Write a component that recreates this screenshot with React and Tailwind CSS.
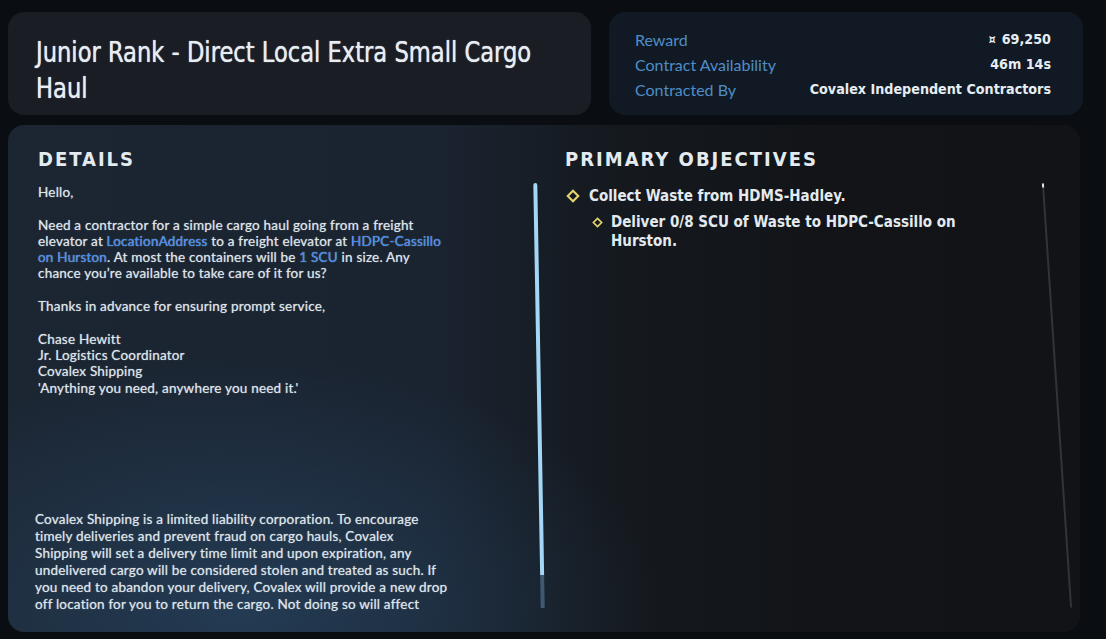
const body = "font-['Lato','Open_Sans',sans-serif]"
const cond = "font-['DejaVu_Sans',sans-serif] font-stretch-condensed"

function Diamond({ size = 12 }) {
  return (
    <svg width={size} height={size} viewBox="0 0 12 12" className="shrink-0">
      <path d="M6 1.5 L10.5 6 L6 10.5 L1.5 6 Z" fill="none" stroke="#e6d56c" strokeWidth="1.8" />
    </svg>
  )
}

function InfoRow({ label, value }) {
  return (
    <div className="flex items-center justify-between h-[24px]">
      <span className={`${body} text-[16px] text-[#4f8dc6]`}>{label}</span>
      <span className={`${cond} font-bold text-[14.2px] text-[#e6edf2]`}>{value}</span>
    </div>
  )
}

export default function App() {
  const link = 'text-[#3d8ff2]'
  return (
    <div className="w-[1106px] h-[639px] overflow-hidden bg-[#0a0d11] flex flex-col">
      <div className="flex gap-[18px] pt-[12px] pl-[8px]">
        <div className="w-[583px] h-[103px] rounded-[16px] bg-[#1a1d23] pl-[28px] pt-[22px]">
          <h1 className={`${cond} text-[29px] leading-[36px] text-[#e6edf3] whitespace-nowrap origin-left scale-x-[0.867] [text-shadow:0_0_1px_#e6edf3]`}>
            Junior Rank - Direct Local Extra Small Cargo<br />Haul
          </h1>
        </div>
        <div className="w-[474px] h-[103px] rounded-[16px] bg-[#111a24] pl-[26px] pr-[32px] pt-[16px] flex flex-col gap-[1px]">
          <InfoRow label="Reward" value={<span><span className="text-[12px] mr-[6px]">¤</span>69,250</span>} />
          <InfoRow label="Contract Availability" value="46m 14s" />
          <InfoRow label="Contracted By" value="Covalex Independent Contractors" />
        </div>
      </div>

      <div className="mt-[10px] ml-[8px] w-[1072px] h-[507px] rounded-[16px] overflow-hidden flex bg-[radial-gradient(ellipse_55%_70%_at_22%_95%,rgba(42,78,112,0.55),transparent_70%),linear-gradient(90deg,#1c2633_0%,#1a2330_40%,#151a20_55%,#121418_75%,#111316_100%)]">
        <div className="w-[540px] shrink-0 flex pl-[30px] pt-[19px]">
          <div className="flex-1">
            <h2 className={`${cond} font-bold text-[20px] tracking-[0.1em] text-[#e4ebf0]`}>DETAILS</h2>
            <div className={`${body} text-[13.5px] tracking-[0.2px] leading-[16.3px] text-[#dde4ea] mt-[10px] [text-shadow:0_0_1px_rgba(221,228,234,0.7)]`}>
              <p>Hello,</p>
              <p className="mt-[16.3px]">
                Need a contractor for a simple cargo haul going from a freight<br />
                elevator at <span className={link}>LocationAddress</span> to a freight elevator at <span className={link}>HDPC-Cassillo</span><br />
                <span className={link}>on Hurston</span>. At most the containers will be <span className={link}>1 SCU</span> in size. Any<br />
                chance you’re available to take care of it for us?
              </p>
              <p className="mt-[16.3px]">Thanks in advance for ensuring prompt service,</p>
              <p className="mt-[16.3px]">
                Chase Hewitt<br />
                Jr. Logistics Coordinator<br />
                Covalex Shipping<br />
                'Anything you need, anywhere you need it.'
              </p>
              <p className="mt-[115px] -ml-[3px] leading-[17px]">
                Covalex Shipping is a limited liability corporation. To encourage<br />
                timely deliveries and prevent fraud on cargo hauls, Covalex<br />
                Shipping will set a delivery time limit and upon expiration, any<br />
                undelivered cargo will be considered stolen and treated as such. If<br />
                you need to abandon your delivery, Covalex will provide a new drop<br />
                off location for you to return the cargo. Not doing so will affect
              </p>
            </div>
          </div>
          <div className="w-[8px] mr-[3px] mt-[39px] flex flex-col -rotate-1 h-[425px]">
            <div className="w-[4px] flex-1 rounded-t-[2px] bg-[#a4d6f6]" />
            <div className="w-[4px] h-[33px] bg-[#3e5a72]" />
          </div>
        </div>

        <div className="flex-1 flex pl-[17px] pt-[19px]">
          <div className="flex-1">
            <h2 className={`${cond} font-bold text-[20px] tracking-[0.1em] text-[#e4ebf0]`}>PRIMARY OBJECTIVES</h2>
            <div className={`${cond} font-bold text-[15px] text-[#e3eaf0] mt-[11px]`}>
              <div className="flex items-center gap-[9px] ml-[1px]">
                <Diamond size={14} />
                <span>Collect Waste from HDMS-Hadley.</span>
              </div>
              <div className="flex items-start gap-[8px] ml-[27px] mt-[5px] leading-[19px]">
                <span className="mt-[4px]"><Diamond size={11} /></span>
                <span>Deliver 0/8 SCU of Waste to HDPC-Cassillo on<br />Hurston.</span>
              </div>
            </div>
          </div>
          <div className="w-[2px] h-[425px] mt-[39px] mr-[22px] -rotate-[3.8deg] flex flex-col bg-[#30353b]">
            <div className="h-[4px] bg-[#dfe4e8]" />
          </div>
        </div>
      </div>
    </div>
  )
}
